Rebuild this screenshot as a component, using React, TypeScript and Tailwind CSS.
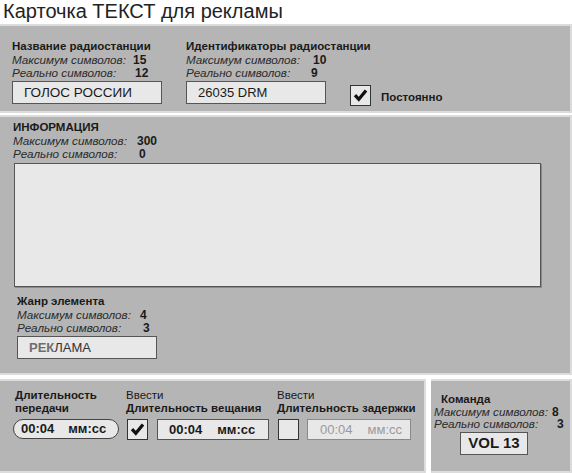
import React from 'react';

const CheckMark: React.FC = () => (
  <svg viewBox="0 0 20 20" className="w-[17px] h-[17px]">
    <path d="M3.5 9.5 L8 14.5 L16.5 4" fill="none" stroke="#111" strokeWidth="3.8" strokeLinejoin="miter" />
  </svg>
);

const CheckBox: React.FC<{ checked?: boolean }> = ({ checked }) => (
  <div className="w-[21px] h-[21px] bg-[#e8e8e8] border border-[#333] flex items-center justify-center">
    {checked && <CheckMark />}
  </div>
);

// two italic counter rows: max and actual symbol count
const Counters: React.FC<{ max: string; real: string; maxW: string; realW: string; row?: string }> = ({
  max,
  real,
  maxW,
  realW,
  row = 'h-[13px] leading-[13px]',
}) => (
  <>
    <div className={`flex items-baseline whitespace-nowrap ${row}`}>
      <span className={`italic text-[11.7px] text-[#2a2a2a] flex-none ${maxW}`}>Максимум символов:</span>
      <span className="font-bold text-[12px] text-[#1a1a1a]">{max}</span>
    </div>
    <div className={`flex items-baseline whitespace-nowrap ${row}`}>
      <span className={`italic text-[11.7px] text-[#2a2a2a] flex-none ${realW}`}>Реально символов:</span>
      <span className="font-bold text-[12px] text-[#1a1a1a]">{real}</span>
    </div>
  </>
);

const Panel: React.FC<{ className?: string; children: React.ReactNode }> = ({ className = '', children }) => (
  <div className={`bg-[#b5b5b5] border-2 border-l-0 border-[#dcdcdc] ${className}`}>{children}</div>
);

const Title: React.FC<{ children: React.ReactNode }> = ({ children }) => (
  <div className="font-bold text-[11.5px] leading-[13px] whitespace-nowrap">{children}</div>
);

export default function App() {
  return (
    <div className="w-[572px] h-[473px] bg-white text-[#1a1a1a] font-['Liberation_Sans',Arial,sans-serif] overflow-hidden">
      <div className="h-[24px] pl-[3px] text-[20px] leading-[22px] text-[#222]">Карточка ТЕКСТ для рекламы</div>

      {/* Station name and identifiers */}
      <Panel className="h-[89px] w-[572px] flex pt-[14px] pl-[12px]">
        <div className="w-[174px]">
          <Title>Название радиостанции</Title>
          <Counters max="15" real="12" maxW="w-[121px]" realW="w-[123px]" />
          <div className="mt-[2px] w-[150px] h-[23px] bg-[#e8e8e8] border border-[#555] pl-[11px] text-[13.5px] leading-[21px]">
            ГОЛОС РОССИИ
          </div>
        </div>
        <div className="w-[164px]">
          <Title>Идентификаторы радиостанции</Title>
          <Counters max="10" real="9" maxW="w-[127px]" realW="w-[125px]" />
          <div className="mt-[2px] w-[140px] h-[23px] bg-[#e8e8e8] border border-[#555] pl-[11px] text-[13px] leading-[21px]">
            26035 DRM
          </div>
        </div>
        <div className="flex items-end pb-[5px]">
          <div className="flex items-center gap-[10px]">
            <CheckBox checked />
            <span className="font-bold text-[11.5px] mt-[4px]">Постоянно</span>
          </div>
        </div>
      </Panel>

      {/* Information text */}
      <Panel className="mt-[2px] h-[260px] w-[572px] pt-[4px] pl-[13px]">
        <Title>ИНФОРМАЦИЯ</Title>
        <Counters max="300" real="0" maxW="w-[124px]" realW="w-[126px]" />
        <div className="mt-[3px] ml-[1px] w-[527px] h-[124px] bg-[#e8e8e8] border border-[#555] shadow-[1px_1px_0_#8a8a8a]" />

        <div className="mt-[8px] pl-[4px]">
          <Title>Жанр элемента</Title>
          <Counters max="4" real="3" maxW="w-[123px]" realW="w-[126px]" />
          <div className="mt-[2px] w-[140px] h-[23px] bg-[#e8e8e8] border border-[#555] pl-[11px] text-[13px] leading-[21px]">
            <span className="font-bold text-[#6e6e6e]">РЕК</span>
            <span className="text-[#333]">ЛАМА</span>
          </div>
        </div>
      </Panel>

      <div className="mt-[4px] flex gap-[5px]">
        {/* Durations */}
        <Panel className="h-[94px] w-[426px] flex pt-[8px] pl-[13px]">
          <div className="w-[113px]">
            <div className="font-bold text-[11.5px] leading-[13px] pl-[2px]">
              Длительность
              <br />
              передачи
            </div>
            <div className="mt-[4px] w-[106px] h-[20px] rounded-full bg-[#e8e8e8] border border-[#444] flex items-center pl-[7px] gap-[14px] font-bold text-[13px]">
              <span>00:04</span>
              <span>мм:сс</span>
            </div>
          </div>
          <div className="w-[151px]">
            <div className="text-[11.5px] leading-[13px]">Ввести</div>
            <Title>Длительность вещания</Title>
            <div className="mt-[4px] flex items-center gap-[9px] pl-[1px]">
              <CheckBox checked />
              <div className="w-[112px] h-[21px] bg-[#e8e8e8] border border-[#555] flex items-center pl-[11px] gap-[15px] font-bold text-[13px]">
                <span>00:04</span>
                <span>мм:сс</span>
              </div>
            </div>
          </div>
          <div>
            <div className="text-[11.5px] leading-[13px]">Ввести</div>
            <Title>Длительность задержки</Title>
            <div className="mt-[4px] flex items-center gap-[8px] pl-[1px]">
              <CheckBox />
              <div className="w-[104px] h-[21px] bg-[#e8e8e8] border border-[#8a8a8a] flex items-center pl-[12px] gap-[15px] text-[13px] text-[#9a9a9a]">
                <span>00:04</span>
                <span>мм:сс</span>
              </div>
            </div>
          </div>
        </Panel>

        {/* Command */}
        <Panel className="h-[94px] flex-1 pt-[12px] pl-[3px]">
          <div className="pl-[7px]">
            <Title>Команда</Title>
          </div>
          <Counters max="8" real="3" maxW="w-[118px]" realW="w-[123px]" row="h-[12px] leading-[12px]" />
          <div className="mt-[2px] ml-[26px] w-[68px] h-[23px] bg-[#e8e8e8] border border-[#555] flex items-center justify-center font-bold text-[15px]">
            VOL 13
          </div>
        </Panel>
      </div>
    </div>
  );
}
